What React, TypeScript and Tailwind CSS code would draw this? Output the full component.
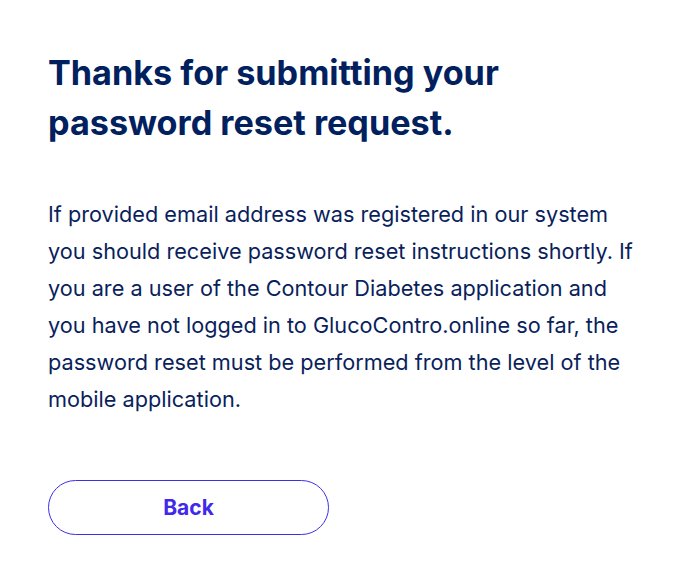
export default function App() {
  return (
    <div className="min-h-screen bg-white px-12 pt-12 font-['Inter',sans-serif]">
      <h1 className="max-w-[500px] text-[34.2px] font-bold leading-[50px] text-[#00205e]">
        Thanks for submitting your password reset request.
      </h1>
      <p className="mt-12 max-w-[596px] text-[21.7px] leading-[37px] text-[#0a1f5c]">
        If provided email address was registered in our system you should receive password reset instructions shortly.
        If you are a user of the Contour Diabetes application and you have not logged in to GlucoContro.online so far,
        the password reset must be performed from the level of the mobile application.
      </p>
      <button className="mt-[62px] h-[55px] w-[281px] rounded-full border border-[#3f2ee6] text-[21px] font-bold text-[#4228ea]">
        Back
      </button>
    </div>
  );
}
